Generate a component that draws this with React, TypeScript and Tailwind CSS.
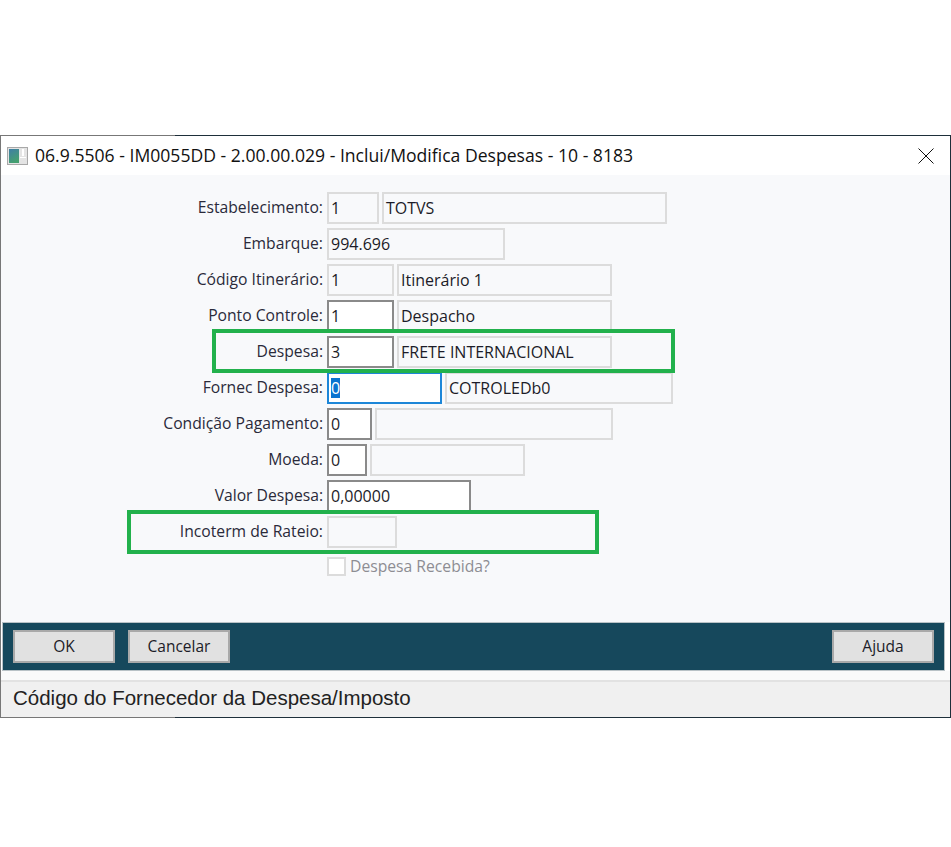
const FONT = "font-['Open_Sans','Noto_Sans',sans-serif]";

type F = { w: string; v?: string; kind: 'off' | 'on' | 'focus' };
type Row = { label: string; fields: F[] };

const rows: Row[] = [
  { label: 'Estabelecimento:', fields: [{ w: 'w-[52px]', v: '1', kind: 'off' }, { w: 'w-[285px]', v: 'TOTVS', kind: 'off' }] },
  { label: 'Embarque:', fields: [{ w: 'w-[178px]', v: '994.696', kind: 'off' }] },
  { label: 'Código Itinerário:', fields: [{ w: 'w-[67px]', v: '1', kind: 'off' }, { w: 'w-[215px]', v: 'Itinerário 1', kind: 'off' }] },
  { label: 'Ponto Controle:', fields: [{ w: 'w-[67px]', v: '1', kind: 'on' }, { w: 'w-[215px]', v: 'Despacho', kind: 'off' }] },
  { label: 'Despesa:', fields: [{ w: 'w-[67px]', v: '3', kind: 'on' }, { w: 'w-[215px]', v: 'FRETE INTERNACIONAL', kind: 'off' }] },
  { label: 'Fornec Despesa:', fields: [{ w: 'w-[115px]', v: '0', kind: 'focus' }, { w: 'w-[228px]', v: 'COTROLEDb0', kind: 'off' }] },
  { label: 'Condição Pagamento:', fields: [{ w: 'w-[45px]', v: '0', kind: 'on' }, { w: 'w-[238px]', kind: 'off' }] },
  { label: 'Moeda:', fields: [{ w: 'w-[40px]', v: '0', kind: 'on' }, { w: 'w-[155px]', kind: 'off' }] },
  { label: 'Valor Despesa:', fields: [{ w: 'w-[144px]', v: '0,00000', kind: 'on' }] },
  { label: 'Incoterm de Rateio:', fields: [{ w: 'w-[70px]', kind: 'off' }] },
];

function Field({ f }: { f: F }) {
  const cls =
    f.kind === 'off'
      ? 'border-2 border-[#dcdcdc] bg-[#f8f9fb]'
      : f.kind === 'on'
        ? 'border-2 border-[#8a8a8a] bg-white'
        : 'border-2 border-[#1c86d8] bg-white';
  return (
    <div className={`${f.w} h-[32px] shrink-0 flex items-center pl-[2px] text-[16px] leading-none whitespace-nowrap text-[#1c1c28] ${cls}`}>
      {f.kind === 'focus' ? <span className="bg-[#0a74d0] text-white leading-[20px]">{f.v}</span> : f.v}
    </div>
  );
}

function Btn({ children }: { children: string }) {
  return (
    <button className="w-[102px] h-[33px] border-2 border-[#a9a9a9] bg-[#e1e1e1] text-[15.5px] text-[#1c1c28] flex items-center justify-center">
      {children}
    </button>
  );
}

export default function App() {
  return (
    <div className={`h-[847px] w-[951px] bg-white pt-[135px] overflow-hidden relative ${FONT}`}>
      <div className="flex h-px"><div className="w-[175px] bg-[#777]" /><div className="flex-1 bg-[#1e2f3a]" /></div>
      <div className="h-[581px] border-l border-l-[#777] border-r border-r-[#1e2f3a] flex flex-col">
        <div className="h-[39px] bg-white flex items-center pl-[6px] shrink-0">
          <svg width="21" height="18" viewBox="0 0 21 18" className="shrink-0">
            <defs>
              <linearGradient id="ic" x1="0" y1="0" x2="0.4" y2="1">
                <stop offset="0" stopColor="#3f7ea6" />
                <stop offset="1" stopColor="#45a070" />
              </linearGradient>
            </defs>
            <rect x="0.5" y="0.5" width="20" height="17" fill="#e4e4e4" stroke="#a8a8a8" />
            <rect x="2" y="2" width="10" height="14" fill="url(#ic)" />
            <rect x="15" y="2" width="2" height="7" fill="#ffffff" />
            <rect x="13" y="10" width="6" height="1" fill="#ffffff" />
          </svg>
          <span className="ml-[7px] text-[17.6px] text-[#111] whitespace-nowrap">06.9.5506 - IM0055DD - 2.00.00.029 - Inclui/Modifica Despesas - 10 - 8183</span>
          <svg width="16" height="16" viewBox="0 0 16 16" className="ml-auto mr-[16px]">
            <path d="M0.5 0.5 L15.5 15.5 M15.5 0.5 L0.5 15.5" stroke="#111" strokeWidth="1" fill="none" />
          </svg>
        </div>
        <div className="h-[447px] bg-[#f8f9fb] pt-[17px] shrink-0">
          <div className="flex flex-col gap-1">
            {rows.map((r) => (
              <div key={r.label} className="flex items-center h-[32px]">
                <div className="w-[322px] shrink-0 text-right text-[15.7px] leading-none pb-[1px] text-[#2a2a3a] whitespace-nowrap">{r.label}</div>
                <div className="flex gap-[3px] ml-[4px]">
                  {r.fields.map((f, i) => <Field key={i} f={f} />)}
                </div>
              </div>
            ))}
          </div>
          <div className="flex items-center mt-[8px] ml-[326px] h-[20px]">
            <div className="w-[19px] h-[19px] border-2 border-[#dcdcdc] bg-white" />
            <span className="ml-[4px] text-[15.7px] leading-none pt-px text-[#8d8d93]">Despesa Recebida?</span>
          </div>
        </div>
        <div className="h-[49px] ml-px mr-[5px] bg-[#16485c] border border-[#b9c2c6] flex items-center justify-between pl-[10px] pr-[10px] shrink-0">
          <div className="flex gap-[13px]"><Btn>OK</Btn><Btn>Cancelar</Btn></div>
          <Btn>Ajuda</Btn>
        </div>
        <div className="flex-1 bg-[#fafafa]" />
        <div className="h-[37px] bg-[#f0f0f0] border-t-2 border-t-[#e2e2e2] flex items-center pl-[12px] pb-[2px] text-[20.5px] text-[#222] font-['Liberation_Sans',sans-serif] shrink-0">
          Código do Fornecedor da Despesa/Imposto
        </div>
      </div>
      <div className="flex h-px"><div className="w-[175px] bg-[#777]" /><div className="flex-1 bg-[#1e2f3a]" /></div>

      <div className="absolute left-[212px] top-[329px] w-[463px] h-[44px] border-[4px] border-[#22b14c]" />
      <div className="absolute left-[127px] top-[510px] w-[472px] h-[44px] border-[4px] border-[#22b14c]" />
    </div>
  );
}
